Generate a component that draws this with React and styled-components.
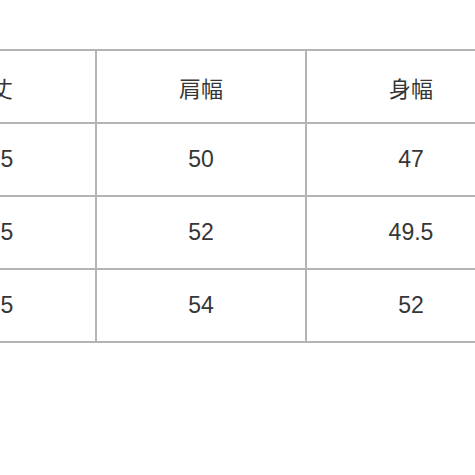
import React from "react";
import styled, { createGlobalStyle } from "styled-components";

const Global = createGlobalStyle`
  html, body { margin: 0; padding: 0; background: #ffffff; }
  body { width: 475px; height: 475px; overflow: hidden; }
`;

const Page = styled.div`
  width: 475px;
  height: 475px;
  overflow: hidden;
  background: #fff;
  padding-top: 49px;
  box-sizing: border-box;
`;

const Table = styled.table`
  border-collapse: collapse;
  margin-left: -115px;
  table-layout: fixed;
  width: 632px;
  min-width: 632px;
  font-family: "Liberation Sans", "Noto Sans CJK JP", sans-serif;
  color: #363636;
`;

const Cell = styled.td`
  width: 208px;
  height: 71px;
  padding: 0;
  border: 2px solid #b4b4b4;
  text-align: center;
  vertical-align: middle;
  font-size: ${(p) => (p.$head ? "22px" : "23px")};
  font-family: ${(p) =>
    p.$head
      ? '"Noto Sans CJK JP", "Liberation Sans", sans-serif'
      : '"Liberation Sans", "Noto Sans CJK JP", sans-serif'};
  font-weight: 400;
  line-height: 1;
`;

const header = ["着丈", "肩幅", "身幅"];
const rows = [
  ["67.5", "50", "47"],
  ["69.5", "52", "49.5"],
  ["71.5", "54", "52"],
];

export default function App() {
  return (
    <Page>
      <Global />
      <Table>
        <tbody>
          <tr>
            {header.map((h) => (
              <Cell key={h} $head>
                {h}
              </Cell>
            ))}
          </tr>
          {rows.map((r, i) => (
            <tr key={i}>
              {r.map((v, j) => (
                <Cell key={j}>{v}</Cell>
              ))}
            </tr>
          ))}
        </tbody>
      </Table>
    </Page>
  );
}
